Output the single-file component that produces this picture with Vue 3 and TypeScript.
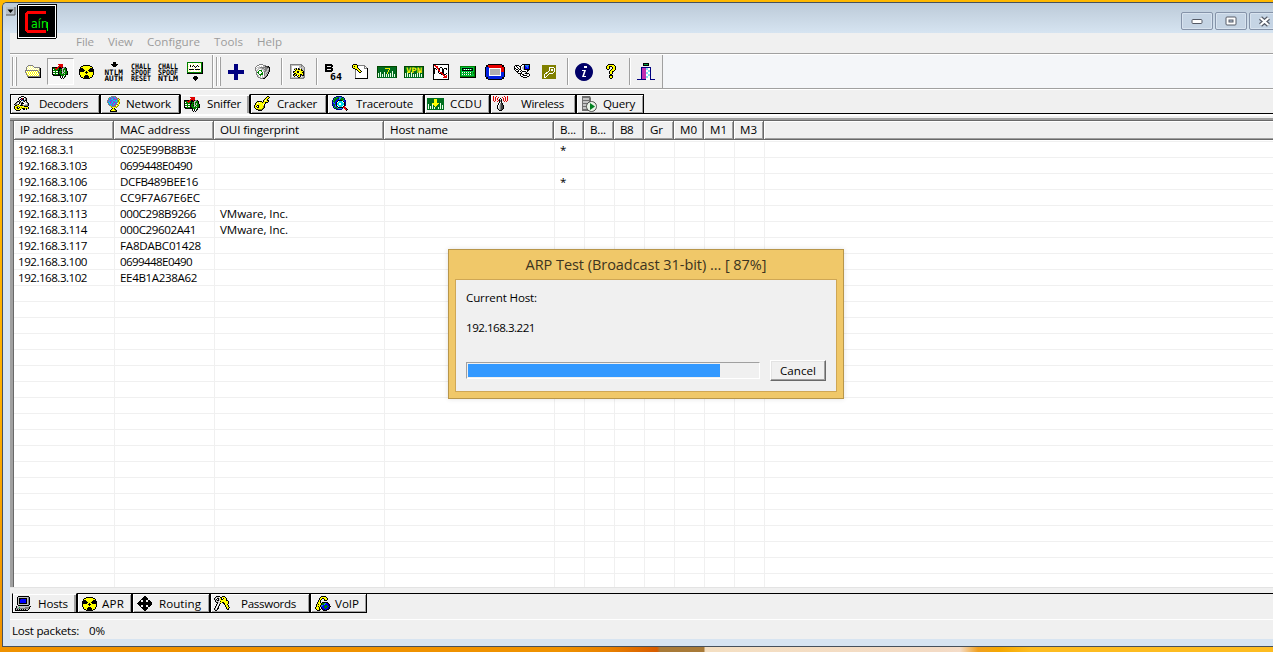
<script setup lang="ts">
interface Shape { d: string; f?: string; s?: string; w?: number }
interface Label { t: string; x: number; y: number; w: number; c: string; z: number }
interface Icon { w: number; h: number; px?: string[]; shapes?: Shape[]; labels?: Label[] }
interface Tab { label: string; icon: string; width: number; pad: number; gap: number; text: number; active?: boolean }

const palette: Record<string, string> = {
  k: '#000000', w: '#ffffff', g: '#808080', s: '#c0c0c0', y: '#ffff00', o: '#808000', r: '#e00000',
  G: '#008000', L: '#00c040', b: '#0000ff', n: '#000080', c: '#00d8e8', m: '#c020c0', p: '#ffff99', d: '#404040', B: '#2080f0'
}

// Turns rows of palette letters into one path per colour.
function pixels(rows: string[]): Shape[] {
  const out: Record<string, string> = {}
  rows.forEach((row, y) => {
    for (let x = 0; x < row.length; x++) {
      const ch = row[x]
      if (!palette[ch]) continue
      let n = 1
      while (row[x + n] === ch) n++
      out[ch] = (out[ch] || '') + `M${x} ${y}h${n}v1h-${n}z`
      x += n - 1
    }
  })
  return Object.keys(out).map(c => ({ d: out[c], f: palette[c] }))
}

const radiation = [
  '....kkkkkkk.....', '..kkyyyyyyykk...', '.kyyyyyyyyyyyk..', '.kkkyyyyyyykkk..', 'kkkkkyyyyykkkkk.', 'kkkkkkyyykkkkkk.',
  'kkkkkyykyykkkkk.', 'kyyyyykkkyyyyyk.', 'kyyyyyykyyyyyyk.', 'kyyyyyyyyyyyyyk.', '.kyyyykkkyyyyk..', '.kyyykkkkkyyyk..',
  '..kkykkkkkykk...', '....kkkkkkk.....'
]
const sniffer = [
  '......rrrrr.....', '.......rrrr.....', '......rrrrr.....', 'kkkkkrrkkrkggk..', 'kGGrrrGkkkssGGk.', 'kwGGrGGkGGsGGGk.',
  'kGGGGGkkGksGsGk.', 'kwwGwwkGGGsGsGGk', 'kGGGGGkGGkssGGGk', 'kwwGwwkGGGsGsGGk', 'kkGGGGkkGGGGGGkk', '.kkkkkkkkGGGwk..',
  '........kwkwGk..', '........kwkwk...', '.........k.k....'
]
const icons: Record<string, Icon> = {
  folder: { w: 16, h: 14, px: [
    '...ggggg........', '..gpwpwpg.......', '.gwpwpwpwgggggg.', '.gpwpwpwpwpwpwgk', '.gwpwpwpwpwpwpgk', 'gggggggggggggpgk', 'gwywywywywywygpk',
    'gywywywywywywggk', '.gwywywywywywygk', '.gywywywywywywgk', '..gywywywywywygk', '..gggggggggggggk', '...kkkkkkkkkkkkk'] },
  sniffer: { w: 16, h: 15, px: sniffer },
  radiation: { w: 16, h: 14, px: radiation },
  ntlm: { w: 20, h: 20, shapes: [{ d: 'M9 0h3v2h2v1h-1v1h-1v1h-3v-1h-1v-1h-1v-1h2z', f: '#000' }],
    labels: [{ t: 'NTLM', x: 0.5, y: 12.5, w: 18.5, c: '#000', z: 7.5 }, { t: 'AUTH', x: 0.5, y: 18.5, w: 18.5, c: '#000', z: 7.5 }] },
  reset: { w: 20, h: 20, labels: ['CHALL', 'SPOOF', 'RESET'].map((t, i) => ({ t, x: 0, y: 6.5 + i * 6, w: 20, c: '#000', z: 7.5 })) },
  spoof: { w: 20, h: 20, labels: ['CHALL', 'SPOOF', 'NTLM'].map((t, i) => ({ t, x: 0, y: 6.5 + i * 6, w: 20, c: '#000', z: 7.5 })) },
  monitor: { w: 16, h: 19, px: [
    'GGGGGGGGGGGGGGGk', 'GwwwwpwwwwwpwpGk', 'GpwpwwpwpwwwpwGk', 'GwwkwpkwwwkwwwGk', 'GpwkwkwkpkwkpwGk', 'GwwpwwwwkwwwwwGk', 'GpwwwpwpwwpwwpGk',
    'GwkkkkkwkkkkkwGk', 'GpwpwwwwwpwpwwGk', 'GwpwwwpwwwwwpwGk', 'GGGGGGGGGGGGGGGk', 'kkkkkkkkkkkkkkkk', '', '', '.......kkk......', '......kkkkk.....', '......kkkkk.....', '.......kkk......', '........k.......'] },
  plus: { w: 16, h: 16, shapes: [{ d: 'M6 0h4v6h6v4h-6v6h-4v-6h-6v-4h6z', f: '#000080' }] },
  trash: { w: 16, h: 16, px: [
    '....gggg........', '..ggwwwwggg.....', '.gwwswswssdddk..', 'gwsssgggggggddk.', 'gswssssggsgggsk.', 'gwsswwsssgggssk.',
    'gsswGGGwssggsgk.', '.gwGwwGwsggssgk.', '.gGGwwwGwgssgk..', '.gwGwwGGwgsgsk..', '.gswGGGGwgssk...', '..gswGwswgsgk...', '..gswswswsgk....', '...ggswssgk.....', '.....gggkk......'] },
  config: { w: 16, h: 16, px: [
    'gggggggggggg....', 'gssssssssssgg...', 'gswwwwwwwssgsg..', 'gswwwwwwwsssssg.', 'gswwsgkwkgwgssg.', 'gswwkykykkykssg.',
    'gswwwkyyyyykksg.', 'gswkkyykkyyyykg.', 'gswkyyykkwyykkg.', 'gswwkkyyyyyyykg.', 'gswkkykyyykkykg.', 'gswkykkwkykgkkg.', 'gswwkwwkyykwssg.', 'gssssssskksssgg.', 'gggggggggggggg..'] },
  b64: { w: 18, h: 18, shapes: [{ d: 'M1 1h7v1h1v2h-1v1h1v3h-1v1h-7zM3 3v1h4v-1zM3 6v1h4v-1z', f: '#000' }],
    labels: [{ t: '64', x: 6, y: 17, w: 12, c: '#000', z: 9 }] },
  keydoc: { w: 16, h: 16, px: [
    '.kkkk...........', 'kyyyykggggggg...', 'kykyykwwwwwwgg..', 'kyyyykwwwwwwgwg.', '.kkyyykwwwwwgggk', '...kkyykwwwwwwwk',
    '...gwkyykwwwwwwk', '...gwwkyykwwwwwk', '...gwwwkkwwwwwwk', '...gwwwwwwwwwwwk', '...gwwwwwwwwwwwk', '...gwwwwwwwwwwwk', '...gwwwwwwwwwwwk', '...gwwwwwwwwwwwk', '...kkkkkkkkkkkkk'] },
  rdp: { w: 16, h: 16, px: [
    'kkkkkkkkkkkkkkkk', 'krrwwwwwwwwwwwwk', 'kwrrrwwwwwwwwwwk', 'kwwrrwwkkwwwwwwk', 'kkkwrrkwwkwkkkwk', 'kkwkwrkwwkkwwkwk', 'kkwwwrrwwkkwwwwk', 'kkwwwkrwwkkwwwwk',
    'kkwwwkwrrkkwwwwk', 'kkwwwwkkrrkwwkwk', 'kwwwwwwwkrrkkwwk', 'kwwwwwwwwwrrwrwk', 'kwwwwwwwwwwrrrwk', 'kwwwwwwwwwrrrrwk', 'kwwwwwwwwwwwwwwk', 'kkkkkkkkkkkkkkkk'] },
  calc: { w: 16, h: 12, px: [
    'GGGGGGGGGGGGGGGk', 'GLLLLLLLLLLLLLGk', 'GLkkkkkkkkkkkLGk', 'GLkLwLwLwLwLkLGk', 'GLkkkkkkkkkkkLGk', 'GLLLLLLLLLLLLLGk', 'GLwGwGwGwGwGLGGk', 'GLLLLLLLLLLGLGGk', 'GLwGwGwGwGwGLLGk', 'GLLLLLLLLLLLLLGk', 'GGGGGGGGGGGGGGGk', 'kkkkkkkkkkkkkkkk'] },
  radius: { w: 20, h: 16, shapes: [{ d: 'M3 0h14v1h2v2h1v10h-1v2h-2v1h-14v-1h-2v-2h-1v-10h1v-2h2z', f: '#000' }, { d: 'M3 1h14v2h2v5h-18v-5h2z', f: '#e80000' }, { d: 'M1 3h3v9h12v-4h3v5h-2v2h-14v-2h-2z', f: '#0020e0' }, { d: 'M4 4h12v8h-12z', f: '#fff' }, { d: 'M5 5h10v6h-10z', f: '#b0b0b0' }] },
  sirius: { w: 16, h: 15, px: [
    '.......wkkkkkkkk', '.kkkk..kwwkBBBBk', 'kwkwwkkwwskbBBbk', 'kwwkwwkwsskbbBbk', 'kkwwkwkwsskbbbbk', 'kwkkwkkwwskkkkkk',
    '.kwwkwwkwwwwwkk.', '..kkkwkwkkkkwk..', '...kwwwkwwwsk...', '....kkkkwwskkkk.', '......kwkkwwsswk', '......kwwkkkkwwk', '.......kkwwwwkk.', '.........kkkk...'] },
  olivekey: { w: 14, h: 14, shapes: [{ d: 'M0 0h14v14h-14z', f: '#808000' }, { d: 'M8 2h3l1 1v4l-1 1h-3l-4 4h-2v-2l5-4v-3zM9 4v1h1v-1z', s: '#fff', w: 1 }] },
  info: { w: 18, h: 18, shapes: [{ d: 'M9 0a9 9 0 1 0 .01 0z', f: '#000068' }, { d: 'M9 3h3v2h-3zM7 7h4l-2 6h2v1h-4l2-6h-2z', f: '#fff' }] },
  help: { w: 10, h: 16, px: [
    '..kkkkkk..', '.kyyyyyyk.', 'kyykkkyyyk', 'kyyk..kyyk', 'kyyk..kyyk', '.kk..kyyyk', '....kyyyk.', '...kyykk..', '...kyyk...', '...kyyk...', '....kk....', '...kkkk...', '...kyyk...', '...kyyk...', '....kk....'] },
  door: { w: 18, h: 18, shapes: [{ d: 'M6 0h6v3h-6z', f: '#000' }, { d: 'M7 1h4v1h-4z', f: '#00a040' }, { d: 'M4 4h10v13h-10z', f: '#000080' }, { d: 'M5 5h4v11h-4z', f: '#c030b0' }, { d: 'M9 5h4v12h-4z', f: '#fff' }, { d: 'M9 5h2v2h-2zM11 7h2v2h-2zM9 9h2v2h-2zM11 11h2v2h-2zM9 13h2v2h-2z', f: '#80e0f0' }, { d: 'M0 16h5v1h-5zM13 16h5v1h-5z', f: '#000080' }] },
  decoders: { w: 16, h: 16, px: [
    '.......kkk......', '.....kkwwwkk....', '....kwwkrkwgk...', '....kwkmkkwgk...', '.....kwkBkgkk...', '...kkgkwwgkwk...',
    '..kgwkggkwwsgk..', '.kgwwk.kkkwwwgk.', 'kgggk..kgwwssgk.', '.kkyyykkkgggggk.', 'kyyooyyyyykkkk..', 'kyok.kyoyyyyyyk.', 'kyykkyyykkkykyk.', '.kyyyyk..kk.k...', '..kkkk..........'] },
  network: { w: 13, h: 16, px: [
    '....ggggg....', '..ggcmBcmg...', '.gcBmcmBcmgo.', '.gBmccBmmBgyo', 'gmcBBmccBcgoy', 'gcmBmcBmccgoy', 'gBcmBcmBmBgyo', '.gcmcBmcBg.yo',
    '.gBcBmcBmgoy.', '..ggcBmgg.yo.', '...yggggoyo..', '....oyyyyo...', '.....kyk.....', '....kyyok....', '...kyyyyok...', '...kkkkkkk...'] },
  cracker: { w: 16, h: 16, px: [
    '.............kk.', '............kyyk', '...........kyyk.', '..........kyyk..', '.........kywykk.', '...kkkkk.kyyyyk.', '..kyywyykyykkk..',
    '.kywyyyyyyyk....', '.kyyyyyyywk.....', 'kyykkyyyyyk.....', 'kykwkyyyyok.....', 'kyykkyyyyok.....', '.kyyyyyyok......', '..kkooook.......', '....kkkk........'] },
  traceroute: { w: 16, h: 16, px: [
    '....nnnnnn......', '..nnLGGBBLnn....', '.nLGGGnBBGGLn...', '.nGGGbbBGGGGn...', 'nLGGbbkkkkGBbn..', 'nGGbbkwcccwkbn..', 'nBGbkwcccccwkn..',
    'nbBbkccwwccckn..', 'nGGbkccwwccckn..', 'nbGBkwcccccwkn..', '.nGBbkwcccwkr...', '.nLGGBkkkkkrrr..', '..nnGGBBBBn.rrk.', '....nnnnnn...rrk', '..............k.'] },
  wireless: { w: 17, h: 16, px: [
    'r..r.......r..r.', 'r.r..r...r..r.r.', 'r.r.r..k..r.r.r.', 'r.r.r.kwk.r.r.r.', 'r.r..rkgk.r.r.r.', '.r..r.kgk..r.r..', '......kwk.......',
    '.....kwgdk......', '.....kwgdk......', '....kwsgddk.....', '....kwsgddk.....', '....kwsgddk.....', '....kssgddk.....', '.....ksgdk......', '......kkk.......'] },
  query: { w: 16, h: 16, shapes: [{ d: 'M1 0h8l1 2v13h-9z', f: '#707070' }, { d: 'M2 2h6v2h-6zM2 5h6v2h-6zM2 8h5v2h-5zM2 11h4v2h-4z', f: '#c4c4c4' }, { d: 'M10.500 5.500a5 5 0 1 0 .01 0z', f: '#e9f3e7', s: '#505050', w: 1 }, { d: 'M9 7l5 3.500l-5 3.500z', f: '#008020' }] },
  hosts: { w: 16, h: 16, px: [
    '...kkkkkkkkkkk..', '..kssssssssssgk.', '..kskkkkkkkksgk.', '..ksknbbbbbksgk.', '..kskbbbbbbksgk.', '..kskbbbbbbksgk.', '..kskbbbbbbksgk.', '..kskkkkkkkksgk.',
    '..kssssssssssgk.', '...kkkkkkkkkkk..', '.kssssssssssssgk', '.kssLsssssggggk.', 'kgggggggggggggk.', 'kskskskskskssk..', 'kkkkkkkkkkkkk...'] },
  routing: { w: 15, h: 15, shapes: [{ d: 'M7 0h1l3 3v1h-2v2h2v-2h1l3 3v1l-3 3h-1v-2h-2v2h2v1l-3 3h-1l-3-3v-1h2v-2h-2v2h-1l-3-3v-1l3-3h1v2h2v-2h-2v-1z', f: '#000' }] },
  passwords: { w: 16, h: 16, px: [
    '..kkkk..kkk.....', '.kssswkkyyyk....', 'kswkksykwkyyk...', 'ksk.ksykkyyyk...', '.kskksyyyyyykk..', '.kssswkyyyyyyyk.', '..kkssyykkyyyyk.', '...kwsk..kkyyyk.',
    '..kswk....kyyk..', '..kwsk.....kyyk.', '.kswk......kyyk.', '.kwsk.......kyyk', 'kswkk.......kyk.', 'kssk.........kk.', '.kk.............'] },
  voip: { w: 16, h: 16, px: [
    '......kkkkk.....', '.....kyyyyyk....', '....kyykkyyyk...', '....kyk..kyyk...', '...kyk...kkk....', '...kyk..........', '..kyyk.kkkkkk...', '..kyyykGGLBbnk..',
    '.kykyykGGBbbbnk.', '.kyyykBBbbGGbnk.', '.kykykBbbGGGGbnk', 'kyyyk.kbbGGGbnk.', 'kyyyk.knbbGbbnk.', '.kyykk.knnbnkk..', '..kkk...kkkk....'] }
}
const bars: Shape[] = [
  { d: 'M0 0h20v12h-20z', f: '#006c20' }, { d: 'M0 0h20v1h-20zM0 0h1v12h-1zM19 0h1v12h-1z', f: '#004800' },
  { d: 'M1 7h1v4h-1zM3 6h1v5h-1zM5 8h1v3h-1zM7 6h1v5h-1zM9 8h1v3h-1zM11 8h1v3h-1zM13 7h1v4h-1zM15 5h1v6h-1zM17 8h1v3h-1z', f: '#e6ffe6' }
]
icons.hash = { w: 20, h: 12, shapes: [...bars, { d: 'M8 2h5v2h-1v2h-1v2h-1v-2h1v-2h1v-1h-4z', f: '#e8f000' }] }
icons.vpn = { w: 20, h: 12, shapes: bars, labels: [{ t: 'VPN', x: 2, y: 6.5, w: 16, c: '#f4f400', z: 7.5 }] }
icons.ccdu = { w: 17, h: 12, shapes: [{ d: 'M0 0h17v12h-17z', f: '#007020' }, { d: 'M1 6h1v5h-1zM3 8h1v3h-1zM5 5h1v6h-1zM7 9h1v2h-1zM11 9h1v2h-1zM13 5h1v6h-1zM15 7h1v4h-1z', f: '#e6ffe6' }, { d: 'M7 1h3v4h2l-3.500 4l-3.500-4h2z', f: '#ffff00' }] }

const shapesOf = (name: string): Shape[] => icons[name].px ? pixels(icons[name].px!) : icons[name].shapes || []

const toolsA = ['folder', 'sniffer', 'radiation', 'ntlm', 'reset', 'spoof', 'monitor']
const toolsB = ['plus', 'trash', '|', 'config', '|', 'b64', 'keydoc', 'hash', 'vpn', 'rdp', 'calc', 'radius', 'sirius', 'olivekey', '|', 'info', 'help', '|', 'door']

const menu = [['File', 18], ['View', 25], ['Configure', 53], ['Tools', 29], ['Help', 25]] as [string, number][]

const topTabs: Tab[] = [
  { label: 'Decoders', icon: 'decoders', width: 90, pad: 3, gap: 9, text: 49 },
  { label: 'Network', icon: 'network', width: 80, pad: 6, gap: 6, text: 45 },
  { label: 'Sniffer', icon: 'sniffer', width: 70, pad: 3, gap: 7, text: 34, active: true },
  { label: 'Cracker', icon: 'cracker', width: 77, pad: 3, gap: 7, text: 40 },
  { label: 'Traceroute', icon: 'traceroute', width: 97, pad: 4, gap: 8, text: 57 },
  { label: 'CCDU', icon: 'ccdu', width: 66, pad: 2, gap: 6, text: 32 },
  { label: 'Wireless', icon: 'wireless', width: 86, pad: 2, gap: 11, text: 43 },
  { label: 'Query', icon: 'query', width: 68, pad: 4, gap: 6, text: 32 }
]
const bottomTabs: Tab[] = [
  { label: 'Hosts', icon: 'hosts', width: 65, pad: 2, gap: 7, text: 30, active: true },
  { label: 'APR', icon: 'radiation', width: 55, pad: 4, gap: 4, text: 22 },
  { label: 'Routing', icon: 'routing', width: 78, pad: 4, gap: 7, text: 42 },
  { label: 'Passwords', icon: 'passwords', width: 100, pad: 3, gap: 11, text: 55 },
  { label: 'VoIP', icon: 'voip', width: 57, pad: 4, gap: 4, text: 24 }
]
const columns = [['IP address', 53], ['MAC address', 70], ['OUI fingerprint', 79], ['Host name', 58], ['B...', 16], ['B...', 16], ['B8', 13], ['Gr', 13], ['M0', 17], ['M1', 17], ['M3', 17], ['', 0]] as [string, number][]
const rows = [
  { ip: '192.168.3.1', ipW: 56, mac: 'C025E99B8B3E', macW: 76, b31: '*' },
  { ip: '192.168.3.103', ipW: 69, mac: '0699448E0490', macW: 72 },
  { ip: '192.168.3.106', ipW: 69, mac: 'DCFB489BEE16', macW: 78, b31: '*' },
  { ip: '192.168.3.107', ipW: 69, mac: 'CC9F7A67E6EC', macW: 80 },
  { ip: '192.168.3.113', ipW: 69, mac: '000C298B9266', macW: 76, oui: 'VMware, Inc.' },
  { ip: '192.168.3.114', ipW: 69, mac: '000C29602A41', macW: 76, oui: 'VMware, Inc.' },
  { ip: '192.168.3.117', ipW: 69, mac: 'FA8DABC01428', macW: 81 },
  { ip: '192.168.3.100', ipW: 69, mac: '0699448E0490', macW: 72 },
  { ip: '192.168.3.102', ipW: 69, mac: 'EE4B1A238A62', macW: 77 }
]
const gridX = [100, 200, 370, 540, 570, 600, 630, 660, 690, 720, 750]

// Spaces the letters so that a label takes the given width.
const vFit = {
  mounted(el: HTMLElement, binding: { value: number }) {
    const n = (el.textContent || '').length
    if (n && binding.value) el.style.letterSpacing = `${(binding.value - el.getBoundingClientRect().width) / n}px`
  }
}
</script>

<template>
  <div class="desktop">
    <div class="window">
      <div class="titlebar">
        <div class="captions">
          <div class="cap"><svg width="12" height="7"><rect x="1" y="1.500" width="10" height="4" rx="1" fill="#fff" stroke="#555a66" /></svg></div>
          <div class="cap"><svg width="12" height="10"><rect x="1" y="1" width="10" height="8" rx="1" fill="#fff" stroke="#555a66" /><rect x="4" y="4" width="4" height="2" fill="#b8c8dc" stroke="#555a66" /></svg></div>
          <div class="cap"><svg width="13" height="11"><path d="M2.500 2l8 7M10.500 2l-8 7" stroke="#555a66" stroke-width="4.500" /><path d="M2.500 2l8 7M10.500 2l-8 7" stroke="#fff" stroke-width="2.200" /></svg></div>
        </div>
        <svg class="sysmenu" width="9" height="9"><rect width="9" height="8" fill="#b8c0c8" /><path d="M0 8h9v-8" fill="none" stroke="#555" /><path d="M1.500 2.500h6l-3 3.500z" fill="#000" /></svg>
        <svg class="logo" width="40" height="35" viewBox="0 0 40 35" shape-rendering="crispEdges">
          <rect width="40" height="35" rx="2" fill="#000" />
          <rect x="1.500" y="1.500" width="37" height="32" rx="1" fill="#000" stroke="#fff" />
          <path d="M29 7h-19l-2 2v18l2 2h19v-3h-18v-16h18z" fill="#f00" />
          <text x="14" y="24" textLength="17" lengthAdjust="spacingAndGlyphs" font-family="DejaVu Sans" font-size="12" fill="#00f000">aín</text>
          <path d="M30.500 18v9" stroke="#00f000" />
        </svg>
      </div>
      <div class="client">
        <div class="menubar">
          <span v-for="m in menu" :key="m[0]"><span v-fit="m[1]">{{ m[0] }}</span></span>
        </div>
        <div class="toolbar">
          <div class="band first">
            <i class="grip" />
            <div v-for="name in toolsA" :key="name" class="tool" :class="{ pressed: name === 'sniffer' }">
              <svg :width="icons[name].w" :height="icons[name].h" shape-rendering="crispEdges">
                <path v-for="(p, i) in shapesOf(name)" :key="i" :d="p.d" :fill="p.f || 'none'" :stroke="p.s" :stroke-width="p.w" />
                <text v-for="l in icons[name].labels || []" :key="l.t" :x="l.x" :y="l.y" :font-size="l.z" :fill="l.c" :textLength="l.w" lengthAdjust="spacingAndGlyphs" class="tiny">{{ l.t }}</text>
              </svg>
            </div>
          </div>
          <div class="band second">
            <i class="grip" />
            <template v-for="(name, k) in toolsB" :key="k">
              <i v-if="name === '|'" class="sep" />
              <div v-else class="tool">
                <svg :width="icons[name].w" :height="icons[name].h" :shape-rendering="name === 'info' ? 'auto' : 'crispEdges'">
                  <path v-for="(p, i) in shapesOf(name)" :key="i" :d="p.d" :fill="p.f || 'none'" :stroke="p.s" :stroke-width="p.w" />
                  <text v-for="l in icons[name].labels || []" :key="l.t" :x="l.x" :y="l.y" :font-size="l.z" :fill="l.c" :textLength="l.w" lengthAdjust="spacingAndGlyphs" class="tiny">{{ l.t }}</text>
                </svg>
              </div>
            </template>
          </div>
        </div>
        <div class="tabs top">
          <div v-for="t in topTabs" :key="t.label" class="tab" :class="{ active: t.active }" :style="{ width: t.width + 'px', paddingLeft: t.pad + 'px', gap: t.gap + 'px' }">
            <svg :width="icons[t.icon].w" :height="icons[t.icon].h" :shape-rendering="t.icon === 'query' ? 'auto' : 'crispEdges'">
              <path v-for="(p, i) in shapesOf(t.icon)" :key="i" :d="p.d" :fill="p.f || 'none'" :stroke="p.s" :stroke-width="p.w" />
            </svg>
            <span v-fit="t.text">{{ t.label }}</span>
          </div>
          <div class="rest" />
        </div>
        <div class="list">
          <div class="head">
            <div v-for="(c, i) in columns" :key="i" class="cell"><span v-fit="c[1]">{{ c[0] }}</span></div>
          </div>
          <div class="body">
            <svg class="lines" width="1260" height="447" shape-rendering="crispEdges">
              <path v-for="x in gridX" :key="x" :d="`M${x + 0.5} 1v446`" />
              <path v-for="n in 28" :key="'h' + n" :d="`M0 ${16 * n - 14.5}h1260`" />
            </svg>
            <div v-for="r in rows" :key="r.ip" class="row">
              <span class="ip"><span v-fit="r.ipW">{{ r.ip }}</span></span>
              <span><span v-fit="r.macW">{{ r.mac }}</span></span>
              <span><span v-if="r.oui" v-fit="68">{{ r.oui }}</span></span>
              <span />
              <span>{{ r.b31 }}</span>
            </div>
          </div>
        </div>
        <div class="tabs bottom">
          <div v-for="t in bottomTabs" :key="t.label" class="tab" :class="{ active: t.active }" :style="{ width: t.width + 'px', paddingLeft: t.pad + 'px', gap: t.gap + 'px' }">
            <svg :width="icons[t.icon].w" :height="icons[t.icon].h" shape-rendering="crispEdges">
              <path v-for="(p, i) in shapesOf(t.icon)" :key="i" :d="p.d" :fill="p.f || 'none'" />
            </svg>
            <span v-fit="t.text">{{ t.label }}</span>
          </div>
          <div class="rest" />
        </div>
        <div class="status"><span v-fit="67">Lost packets:</span><span v-fit="16">0%</span></div>
      </div>
    </div>
    <div class="dialog">
      <div class="dtitle"><span v-fit="241">ARP Test (Broadcast 31-bit) ... [ 87%]</span></div>
      <div class="dbody">
        <div class="line"><span v-fit="71">Current Host:</span></div>
        <div class="line host"><span v-fit="69">192.168.3.221</span></div>
        <div class="actions">
          <div class="progress"><div class="bar" /></div>
          <button class="cancel"><span v-fit="36">Cancel</span></button>
        </div>
      </div>
    </div>
  </div>
</template>

<style>
body { margin: 0; overflow: hidden; }
</style>

<style scoped>
* { box-sizing: border-box; }
.desktop {
  position: relative; width: 1273px; height: 652px; overflow: hidden; padding: 2px 0 5px 2px;
  font: 11.6px/16px "Open Sans", "Noto Sans", sans-serif; color: #000; white-space: pre;
  background:
    linear-gradient(90deg, #ef9200 0, #ef9200 560px, #e88000 610px, #d85c00 657px, #a87a38 660px, #a87a38 704px, #f4dfc2 705px, #f3dac4 940px, #f4dcc8 960px, #f0a020 978px, #f5a800 1000px, #fdbc20 1030px, #fdbc20 100%) 0 647px / 100% 5px no-repeat,
    linear-gradient(180deg, #ffb800, #ffb000 60%, #ef9200);
}
svg { display: block; flex: none; overflow: visible; }
.window {
  width: 1271px; height: 645px; display: flex; flex-direction: column; background: #d7e4f1;
  border: solid #46505c; border-width: 1px 0 1px 1px; border-top-left-radius: 5px; padding-left: 7px;
}
.titlebar { height: 30px; flex: none; position: relative; margin-left: -7px; background: linear-gradient(#bccad8, #d6e4f1); border-top-left-radius: 4px; }
.captions { display: flex; gap: 2px; padding: 9px 0 0 1178px; width: 1300px; }
.cap { width: 32px; height: 18px; border: 1px solid #8593a9; border-radius: 2px; box-shadow: inset 0 0 0 1px #d8e3ef; background: #c5d4e4; display: flex; align-items: center; justify-content: center; flex: none; }
.cap:last-child { padding-right: 2px; }
.sysmenu { position: absolute; left: 3px; top: 4px; }
.logo { position: absolute; left: 14px; top: 1px; z-index: 2; }
.client { flex: none; height: 606px; background: #f0f0f0; display: flex; flex-direction: column; }
.menubar { height: 20px; padding: 1px 0 0 66px; display: flex; gap: 14px; color: #9c9c9c; flex: none; }
.toolbar { height: 37px; flex: none; display: flex; background: #f4f6f9; border-top: 1px solid #a0a0a0; border-bottom: 1px solid #fff; box-shadow: inset 0 1px #fff, inset 0 -1px #a0a0a0; padding: 1px 0; }
.band { height: 33px; display: flex; align-items: center; background: #f0f0f0; border-right: 1px solid #a0a0a0; flex: none; }
.first { width: 203px; padding-left: 2px; }
.second { width: 450px; padding-left: 2px; border-left: 1px solid #fff; }
.grip { width: 5px; height: 29px; border: solid; border-width: 0 1px; border-color: #a0a0a0; box-shadow: inset 1px 0 #fff, inset -1px 0 #fff; flex: none; }
.first .grip { margin-right: 2.5px; }
.second .grip { margin-right: 1.5px; }
.tool { width: 27px; height: 27px; display: flex; align-items: center; justify-content: center; flex: none; }
.pressed { border: solid; border-width: 1px; border-color: #a0a0a0 #fff #fff #a0a0a0; background: #f7f7f7; }
.sep { width: 1px; height: 27px; background: #a0a0a0; margin: 0 3px 0 4px; flex: none; box-shadow: 1px 0 #fff; }
.tiny { font-family: "DejaVu Sans Mono", monospace; font-weight: bold; }
.tabs { display: flex; flex: none; height: 20px; }
.tabs.top { margin-top: 4px; box-shadow: 0 2px #fff; }
.tab { display: flex; align-items: center; border: 1px solid #000; box-shadow: inset 1px 1px #fff, inset -1px -1px #a0a0a0; flex: none; }
.tab.active { border-color: transparent #000 transparent #000; box-shadow: inset 1px 1px #fff, inset -2px 0 #a0a0a0; }
.top .tab.active { border-left-color: #000; }
.rest { flex: 1; }
.top .rest { border-bottom: 1px solid #000; }
.bottom .tab { padding-top: 1px; }
.bottom .tab.active { border-bottom-color: #000; }
.bottom .rest { border-top: 1px solid #000; }
.list { margin-top: 2px; flex: none; border-top: 2px solid #f0f0f0; box-shadow: inset 0 2px #a0a0a0, inset 0 3px #696969, inset 3px 0 #a0a0a0, inset 4px 0 #696969; padding: 3px 0 0 4px; box-sizing: content-box; height: 466px; background: #fff; border-bottom: 1px solid #e3e3e3; overflow: hidden; }
.head { height: 19px; display: grid; grid-template-columns: 100px 100px 170px 170px repeat(7, 30px) 1fr; background: #f0f0f0; border-bottom: 1px solid #696969; }
.cell { padding-left: 6px; line-height: 18px; border-right: 1px solid #696969; box-shadow: inset 1px 1px #fff, inset -1px -1px #a0a0a0; overflow: hidden; }
.cell:last-child { border-right: 0; box-shadow: inset 1px 1px #fff, inset 0 -1px #a0a0a0; }
.body { position: relative; height: 447px; padding-top: 2px; overflow: hidden; }
.lines { position: absolute; left: 0; top: 0; }
.lines path { stroke: #f0f0f0; fill: none; }
.row { position: relative; height: 16px; display: grid; grid-template-columns: 100px 100px 170px 170px 30px; }
.row > span { padding-left: 6px; }
.row > .ip { padding-left: 4px; }
.tabs.bottom { margin: 5px 0 6px 2px; }
.status { border-top: 1px solid #fff; height: 20px; padding: 3px 0 0 2px; display: flex; gap: 10px; flex: none; }
.dialog { position: absolute; left: 448px; top: 249px; width: 396px; height: 150px; background: #f0c869; border: 1px solid #b8964a; padding: 0 6px; box-shadow: 0 0 5px rgba(0, 0, 0, .12); }
.dtitle { height: 29px; line-height: 30px; text-align: center; font-size: 14.5px; color: #3c3420; }
.dbody { height: 113px; background: #f0f0f0; border: 1px solid #cfa755; padding: 10px 10px 0; }
.line { height: 16px; }
.host { margin-top: 14px; }
.actions { display: flex; margin-top: 24px; gap: 10px; align-items: flex-start; }
.progress { width: 294px; height: 17px; margin-top: 2px; border: solid; border-width: 1px; border-color: #a0a0a0 #fff #fff #a0a0a0; padding: 1px; flex: none; }
.bar { width: 252px; height: 13px; background: #3399ff; }
.cancel { width: 56px; height: 21px; flex: none; padding: 0; font: inherit; line-height: 16px; background: #f0f0f0; border: solid 1px; border-color: #fff #696969 #696969 #fff; box-shadow: inset -1px -1px #a0a0a0, inset 1px 1px #e3e3e3; }
</style>
